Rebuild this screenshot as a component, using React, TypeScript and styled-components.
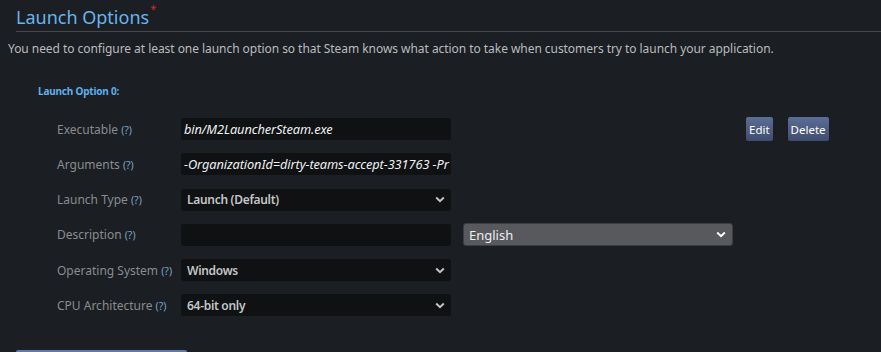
import styled, { createGlobalStyle } from "styled-components";

const GlobalStyle = createGlobalStyle`
  body {
    margin: 0;
    background: #1b1e22;
    font-family: "Noto Sans", "Open Sans", Arial, sans-serif;
  }
`;

// layout

const Page = styled.div`
  width: 881px;
  height: 352px;
  overflow: hidden;
  background: #1b1e22;
`;

const Header = styled.div`
  margin-left: 16px;
  padding-top: 4px;
  height: 27px;
  border-bottom: 1px solid #45484d;
`;

const Title = styled.h2`
  margin: 0;
  font-size: 18px;
  font-weight: 400;
  line-height: 26px;
  color: #67b4ef;
`;

const Required = styled.sup`
  color: #d02a2a;
  font-size: 11px;
  vertical-align: top;
  line-height: 10px;
  margin-left: 1px;
`;

const Intro = styled.p`
  margin: 9px 0 0 8px;
  font-size: 12px;
  line-height: 16px;
  color: #b9bcbf;
  letter-spacing: -0.05px;
`;

const OptionBlock = styled.div`
  margin-top: 27px;
  padding-left: 38px;
`;

const OptionTitle = styled.div`
  font-size: 10px;
  font-weight: 700;
  color: #5fb0ec;
  line-height: 14px;
  letter-spacing: -0.2px;
`;

const Rows = styled.div`
  margin-top: 20px;
  display: flex;
  flex-direction: column;
  gap: 13.3px;
`;

const Row = styled.div`
  display: flex;
  align-items: center;
  height: 22px;
`;

const Label = styled.div`
  width: 124px;
  padding-left: 19px;
  font-size: 12px;
  color: #898d91;
  white-space: nowrap;
`;

const Help = styled.span`
  color: #7aa3c9;
  font-size: 10.5px;
`;

const Field = styled.div<{ $select?: boolean }>`
  width: 270px;
  height: 22px;
  box-sizing: border-box;
  border-radius: 3px;
  background: #0f1113;
  display: flex;
  align-items: center;
  justify-content: space-between;
  padding: 0 6px 0 ${(p) => (p.$select ? "6px" : "3px")};
  overflow: hidden;
  white-space: nowrap;
  font-size: ${(p) => (p.$select ? "12px" : "12.8px")};
  font-weight: ${(p) => (p.$select ? 600 : 400)};
  font-style: ${(p) => (p.$select ? "normal" : "italic")};
  color: ${(p) => (p.$select ? "#c3c5c8" : "#eef0f2")};
  letter-spacing: ${(p) => (p.$select ? "-0.3px" : "-0.1px")};
`;

const LangSelect = styled.div`
  margin-left: 12px;
  width: 270px;
  height: 23px;
  box-sizing: border-box;
  border: 1px solid #3b3d40;
  border-radius: 3px;
  background: #58595c;
  display: flex;
  align-items: center;
  justify-content: space-between;
  padding: 0 6px 0 5px;
  font-size: 13px;
  color: #eceef0;
`;

const Buttons = styled.div`
  margin-left: 295px;
  display: flex;
  gap: 15px;
`;

const SmallButton = styled.button`
  height: 24px;
  padding: 0 3px;
  border: none;
  border-radius: 2px;
  background: linear-gradient(to bottom, #5b6e98, #3f4d6d);
  color: #ffffff;
  font-family: inherit;
  font-size: 11.5px;
`;

const Footer = styled.div`
  margin: 34px 0 0 16px;
  width: 171px;
  height: 8px;
  background: #5f7aa6;
  border-radius: 2px 2px 0 0;
`;

function Chevron({ color }: { color: string }) {
  return (
    <svg width="10" height="7" viewBox="0 0 10 7" aria-hidden="true">
      <path d="M1.2 1.5 5 5.2 8.8 1.5" fill="none" stroke={color} strokeWidth={2} />
    </svg>
  );
}

function App() {
  return (
    <Page>
      <GlobalStyle />
      <Header>
        <Title>
          Launch Options<Required>*</Required>
        </Title>
      </Header>
      <Intro>
        You need to configure at least one launch option so that Steam knows what action to take when customers try to
        launch your application.
      </Intro>
      <OptionBlock>
        <OptionTitle>Launch Option 0:</OptionTitle>
        <Rows>
          <Row>
            <Label>
              Executable <Help>(?)</Help>
            </Label>
            <Field>bin/M2LauncherSteam.exe</Field>
            <Buttons>
              <SmallButton>Edit</SmallButton>
              <SmallButton>Delete</SmallButton>
            </Buttons>
          </Row>
          <Row>
            <Label>
              Arguments <Help>(?)</Help>
            </Label>
            <Field>-OrganizationId=dirty-teams-accept-331763 -Pr</Field>
          </Row>
          <Row>
            <Label>
              Launch Type <Help>(?)</Help>
            </Label>
            <Field $select>
              Launch (Default)
              <Chevron color="#c3c5c8" />
            </Field>
          </Row>
          <Row>
            <Label>
              Description <Help>(?)</Help>
            </Label>
            <Field />
            <LangSelect>
              English
              <Chevron color="#ffffff" />
            </LangSelect>
          </Row>
          <Row>
            <Label>
              Operating System <Help>(?)</Help>
            </Label>
            <Field $select>
              Windows
              <Chevron color="#c3c5c8" />
            </Field>
          </Row>
          <Row>
            <Label>
              CPU Architecture <Help>(?)</Help>
            </Label>
            <Field $select>
              64-bit only
              <Chevron color="#c3c5c8" />
            </Field>
          </Row>
        </Rows>
      </OptionBlock>
      <Footer />
    </Page>
  );
}

export default App;
